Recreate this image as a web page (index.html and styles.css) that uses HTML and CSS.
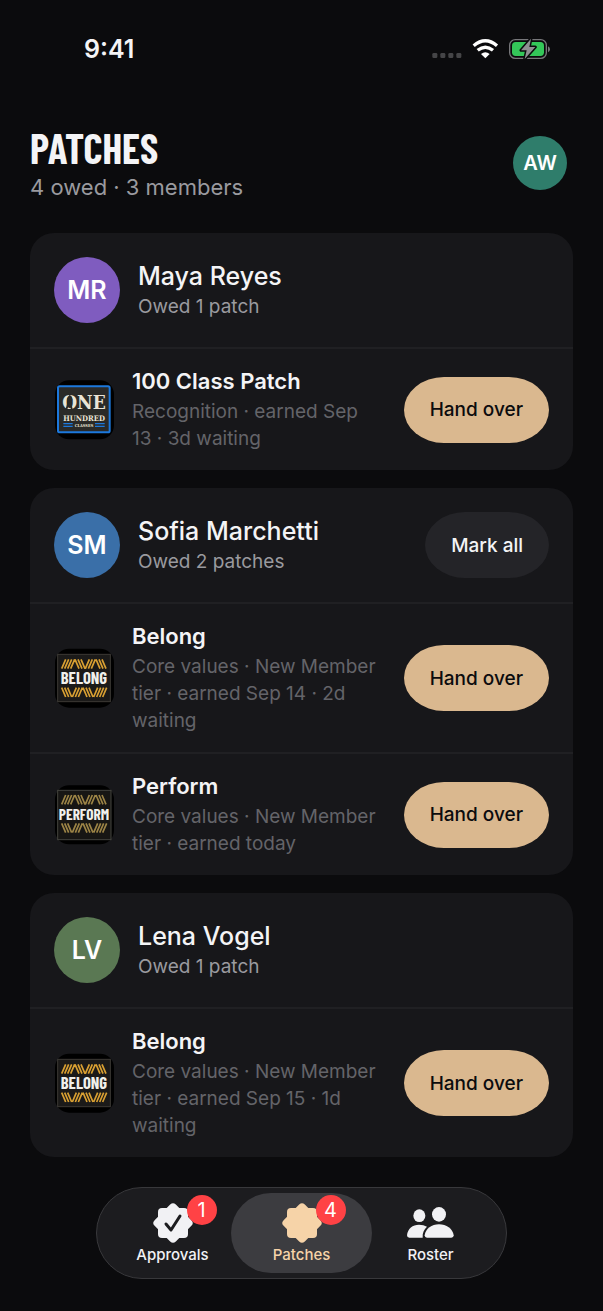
FILE: index.html
```
<!DOCTYPE html>
<html lang="en">
<head>
  <meta charset="UTF-8" />
  <meta name="viewport" content="width=device-width, initial-scale=1" />
  <title>Patches</title>
  <link rel="stylesheet" href="styles.css">
</head>
<body>

  <!-- shared drawings -->
  <svg class="defs" width="0" height="0" aria-hidden="true">
    <defs>
      <symbol id="seal" viewBox="0 0 40 40">
        <rect x="5" y="5" width="30" height="30" rx="4" />
        <rect x="5" y="5" width="30" height="30" rx="4" transform="rotate(45 20 20)" />
      </symbol>
      <g id="stripes" fill="none">
        <path d="M50 86l12-28M59 86l12-28M68 86l12-28M77 86l12-28M90 58l12 28M99 58l12 28M108 58l12 28M121 86l12-28M130 86l12-28M139 86l12-28M153 58l12 28M162 58l12 28M171 58l12 28" />
        <path d="M50 143l12 28M59 143l12 28M68 143l12 28M82 171l12-28M91 171l12-28M100 171l12-28M114 143l12 28M123 143l12 28M132 143l12 28M146 171l12-28M155 171l12-28M164 171l12-28M173 171l12-28" />
      </g>
      <symbol id="patch-belong" viewBox="27 24 180 180">
        <rect x="30" y="26" width="177" height="177" rx="42" fill="#000" />
        <rect x="38" y="43" width="158" height="142" fill="#1b1a19" stroke="#3c3a35" stroke-width="3" />
        <use href="#stripes" stroke="#d9a032" stroke-width="5" />
        <text class="patch-word" x="117" y="132" font-size="50" text-anchor="middle">BELONG</text>
      </symbol>
    </defs>
  </svg>

  <div class="status-bar">
    <span class="time">9:41</span>
    <svg class="status-icons" viewBox="36 40 354 64" aria-hidden="true">
      <g fill="#454547">
        <rect x="37" y="84" width="15" height="15" rx="4" />
        <rect x="61" y="84" width="15" height="15" rx="4" />
        <rect x="85" y="84" width="15" height="15" rx="4" />
        <rect x="109" y="84" width="15" height="15" rx="4" />
      </g>
      <g fill="none" stroke="#fff" stroke-width="10">
        <path d="M161 62Q196 32 231 62" />
        <path d="M173 76Q196 57 219 76" />
      </g>
      <path d="M183 87Q196 77 209 87L196 100Z" fill="#fff" />
      <rect x="269" y="44" width="110" height="56" rx="17" fill="none" stroke="#77777a" stroke-width="4" />
      <rect x="276" y="51" width="96" height="42" rx="11" fill="#34c759" />
      <path d="M384 64q6 3 6 9t-6 9z" fill="#77777a" />
      <path d="M333 41L303 76H320L314 102L346 66H328Z" fill="#8f8f92" stroke="#0b0b0d" stroke-width="9" paint-order="stroke" stroke-linejoin="round" />
    </svg>
  </div>

  <header class="page-header">
    <div>
      <h1>PATCHES</h1>
      <p class="summary">4 owed · 3 members</p>
    </div>
    <button type="button" class="avatar avatar-small teal" aria-label="Account">AW</button>
  </header>

  <main class="card-list">
    <section class="card">
      <div class="member">
        <div class="avatar purple">MR</div>
        <div class="member-text">
          <h2>Maya Reyes</h2>
          <p>Owed 1 patch</p>
        </div>
      </div>
      <div class="patch">
        <svg class="thumb" viewBox="27 30 180 180" aria-hidden="true">
          <rect x="30" y="31" width="177" height="177" rx="42" fill="#000" />
          <rect x="39" y="49" width="155" height="138" rx="5" fill="#2a2a28" stroke="#1c78dc" stroke-width="6" />
          <text class="patch-slab" x="117" y="117" font-size="57" text-anchor="middle">ONE</text>
          <path d="M74 74l5 5 3 10-4 9 5 19-5 1-6-14-5 14-5-1 5-19 0-13z" fill="#2a2a28" />
          <text class="patch-slab" x="117" y="153" font-size="23" text-anchor="middle">HUNDRED</text>
          <path d="M55 161h28M55 169h28M150 161h29M150 169h29" stroke="#1c78dc" stroke-width="4" />
          <text class="patch-slab" x="117" y="171" font-size="12" text-anchor="middle">CLASSES</text>
        </svg>
        <div class="patch-text">
          <h3>100 Class Patch</h3>
          <p>Recognition · earned Sep 13 · 3d waiting</p>
        </div>
        <button type="button" class="btn btn-primary">Hand over</button>
      </div>
    </section>

    <section class="card">
      <div class="member">
        <div class="avatar blue">SM</div>
        <div class="member-text">
          <h2>Sofia Marchetti</h2>
          <p>Owed 2 patches</p>
        </div>
        <button type="button" class="btn">Mark all</button>
      </div>
      <div class="patch">
        <svg class="thumb" aria-hidden="true"><use href="#patch-belong" /></svg>
        <div class="patch-text">
          <h3>Belong</h3>
          <p>Core values · New Member tier · earned Sep 14 · 2d waiting</p>
        </div>
        <button type="button" class="btn btn-primary">Hand over</button>
      </div>
      <div class="patch">
        <svg class="thumb" viewBox="27 28 180 180" aria-hidden="true">
          <rect x="30" y="29" width="177" height="177" rx="42" fill="#000" />
          <rect x="38" y="44" width="160" height="148" fill="#171614" stroke="#44443f" stroke-width="3" />
          <use href="#stripes" stroke="#9c8446" stroke-width="5" />
          <text class="patch-word" x="117" y="134" font-size="46" text-anchor="middle">PERFORM</text>
        </svg>
        <div class="patch-text">
          <h3>Perform</h3>
          <p>Core values · New Member tier · earned today</p>
        </div>
        <button type="button" class="btn btn-primary">Hand over</button>
      </div>
    </section>

    <section class="card">
      <div class="member">
        <div class="avatar green">LV</div>
        <div class="member-text">
          <h2>Lena Vogel</h2>
          <p>Owed 1 patch</p>
        </div>
      </div>
      <div class="patch">
        <svg class="thumb" aria-hidden="true"><use href="#patch-belong" /></svg>
        <div class="patch-text">
          <h3>Belong</h3>
          <p>Core values · New Member tier · earned Sep 15 · 1d waiting</p>
        </div>
        <button type="button" class="btn btn-primary">Hand over</button>
      </div>
    </section>
  </main>

  <nav class="tab-bar" aria-label="Main">
    <a href="#approvals" class="tab">
      <span class="tab-icon">
        <svg viewBox="0 0 40 40" aria-hidden="true">
          <use href="#seal" />
          <path class="check" d="M13 21l5 6 9-14" />
        </svg>
        <span class="badge">1</span>
      </span>
      Approvals
    </a>
    <a href="#patches" class="tab active" aria-current="page">
      <span class="tab-icon">
        <svg viewBox="0 0 40 40" aria-hidden="true"><use href="#seal" /></svg>
        <span class="badge">4</span>
      </span>
      Patches
    </a>
    <a href="#roster" class="tab">
      <span class="tab-icon tab-icon-wide">
        <svg viewBox="324 99 141 120" aria-hidden="true">
          <ellipse cx="361" cy="137" rx="18" ry="19" />
          <ellipse cx="420" cy="133" rx="21" ry="22" />
          <path d="M331 203Q324 203 324 196C326 176 341 164 360 164Q374 164 384 170C375 178 370 188 371 203Z" />
          <path d="M384 203Q377 203 377 196C380 176 398 163 420 163S461 176 464 196Q464 203 457 203Z" />
        </svg>
      </span>
      Roster
    </a>
  </nav>

</body>
</html>
```
FILE: styles.css
```
* {
  box-sizing: border-box;
}
body {
  margin: 0;
  background: #0b0b0d;
  color: #f4f4f6;
  font-family: Inter, "Liberation Sans", sans-serif;
  font-size: 19px;
  line-height: 27px;
}
h1, h2, h3, p {
  margin: 0;
}
.defs {
  position: absolute;
}

/* status bar */
.status-bar {
  display: flex;
  justify-content: space-between;
  align-items: center;
  height: 98px;
  padding: 0 53px 0 84px;
}
.time {
  font-size: 25px;
  font-weight: 600;
}
.status-icons {
  width: 118px;
  height: 22px;
}

/* header */
.page-header {
  display: flex;
  justify-content: space-between;
  align-items: center;
  padding: 26px 36px 30px 30px;
}
h1 {
  font-family: "Barlow Condensed", "Roboto Condensed", "Open Sans Condensed", "Liberation Sans Narrow", "Liberation Sans", sans-serif;
  font-size: 41px;
  font-weight: 700;
  line-height: 48px;
}
.summary {
  color: #9a9a9f;
  font-size: 22px;
  line-height: 30px;
}

.avatar {
  display: flex;
  flex: none;
  justify-content: center;
  align-items: center;
  width: 66px;
  height: 66px;
  padding: 0;
  border: none;
  border-radius: 50%;
  color: #fff;
  font-family: inherit;
  font-size: 25px;
  font-weight: 600;
}
.avatar-small {
  width: 54px;
  height: 54px;
  font-size: 20px;
}
.teal { background: #2f7d6b; }
.purple { background: #7f5cbf; }
.blue { background: #3a6fa8; }
.green { background: #5a7853; }

/* cards */
.card-list {
  display: flex;
  flex-direction: column;
  gap: 18px;
  padding: 1px 30px 0;
}
.card {
  border-radius: 24px;
  background: #17171a;
}
.member {
  display: flex;
  align-items: center;
  gap: 18px;
  padding: 24px;
}
.member-text, .patch-text {
  flex: 1;
  min-width: 0;
}
h2 {
  font-size: 25px;
  font-weight: 500;
  line-height: 33px;
}
.member-text p {
  color: #9a9a9f;
}
.patch {
  display: flex;
  align-items: center;
  gap: 18px;
  padding: 18px 24px;
  border-top: 2px solid #202023;
}
.patch-text {
  padding: 1px 8px 0 0;
}
.patch-text p {
  margin-top: 3px;
  color: #646469;
}
h3 {
  font-size: 22px;
  font-weight: 600;
  line-height: 27px;
}
.thumb {
  flex: none;
  width: 60px;
  height: 60px;
}
.patch-word {
  fill: #f1f0ec;
  font-family: "Barlow Condensed", "Roboto Condensed", "Open Sans Condensed", "Liberation Sans Narrow", "Liberation Sans", sans-serif;
  font-weight: 700;
}
.patch-slab {
  fill: #e9e4d6;
  font-family: "DejaVu Serif Condensed", "DejaVu Serif", "Liberation Serif", serif;
  font-weight: 700;
}
.btn {
  flex: none;
  height: 66px;
  padding: 0 26px;
  border: none;
  border-radius: 40px / 33px;
  background: #242428;
  color: #f4f4f6;
  font-family: inherit;
  font-size: 19px;
  font-weight: 500;
  cursor: pointer;
}
.btn-primary {
  background: #dab88f;
  color: #0b0b0d;
}

/* bottom tabs */
.tab-bar {
  display: flex;
  width: fit-content;
  margin: 30px auto 32px;
  padding: 5px;
  border: 1px solid #38383b;
  border-radius: 46px;
  background: #1c1c1f;
}
.tab {
  display: flex;
  flex-direction: column;
  align-items: center;
  gap: 3px;
  width: 141px;
  padding: 10px 0 9px;
  border-radius: 40px;
  color: #f1f1f4;
  fill: currentColor;
  font-size: 15px;
  font-weight: 500;
  line-height: 18px;
  text-decoration: none;
}
.tab + .tab {
  margin-left: -12px;
}
.tab.active {
  background: #3c3c40;
  color: #f6d3a8;
}
.tab-icon {
  position: relative;
  width: 40px;
  height: 40px;
}
.tab-icon-wide {
  width: 47px;
}
.tab-icon svg {
  display: block;
  width: 100%;
  height: 100%;
}
.check {
  fill: none;
  stroke: #1c1c1f;
  stroke-width: 3;
  stroke-linecap: round;
  stroke-linejoin: round;
}
.badge {
  position: absolute;
  top: -8px;
  left: 34px;
  width: 30px;
  height: 30px;
  border-radius: 50%;
  background: #ff4245;
  color: #fff;
  font-size: 20px;
  font-weight: 400;
  line-height: 30px;
  text-align: center;
}
```
